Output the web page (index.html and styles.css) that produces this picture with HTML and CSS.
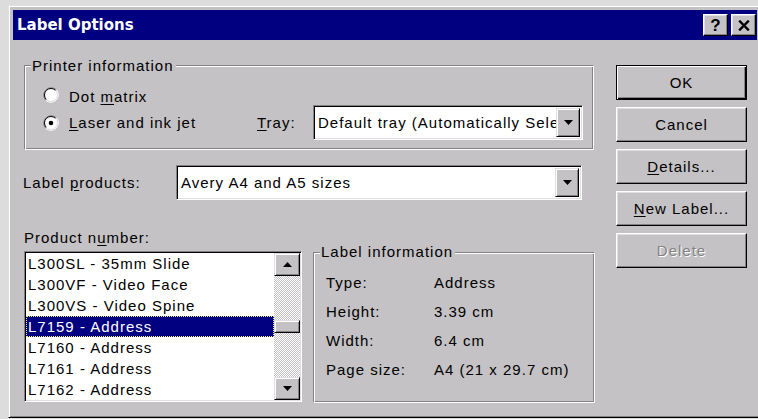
FILE: index.html
```html
<!DOCTYPE html>
<html lang="en">
<head>
<meta charset="utf-8">
<title>Label Options</title>
<link rel="stylesheet" href="styles.css">
</head>
<body>
<div class="window">
  <div class="titlebar">
    <span class="title">Label Options</span>
    <div class="caption-btns">
      <span class="cap-btn help">?</span>
      <span class="cap-btn close">
        <svg width="12" height="11" viewBox="0 0 12 11"><path d="M1.2 0.6 L10.8 10.4 M10.8 0.6 L1.2 10.4" stroke="#000" stroke-width="2.3"/></svg>
      </span>
    </div>
  </div>

  <div class="client">
    <div class="main">
      <div class="group printer">
        <div class="legend">Printer information</div>
        <div class="group-body">
          <div class="radio-row first">
            <label class="radio">
              <svg class="radio-icon" width="16" height="16" viewBox="0 0 16 16">
                <circle cx="8" cy="8" r="6.5" fill="#fff"/>
                <path d="M2.7 13.3 A7.5 7.5 0 0 1 13.3 2.7" fill="none" stroke="#848284"/>
                <path d="M13.3 2.7 A7.5 7.5 0 0 1 2.7 13.3" fill="none" stroke="#fff"/>
                <path d="M3.4 12.6 A6.5 6.5 0 0 1 12.6 3.4" fill="none" stroke="#000"/>
                <path d="M12.6 3.4 A6.5 6.5 0 0 1 3.4 12.6" fill="none" stroke="#e0dfe0"/>
              </svg>
              <span>Dot <u>m</u>atrix</span>
            </label>
          </div>
          <div class="radio-row tray-row">
            <label class="radio laser">
              <svg class="radio-icon" width="16" height="16" viewBox="0 0 16 16">
                <circle cx="8" cy="8" r="6.5" fill="#fff"/>
                <path d="M2.7 13.3 A7.5 7.5 0 0 1 13.3 2.7" fill="none" stroke="#848284"/>
                <path d="M13.3 2.7 A7.5 7.5 0 0 1 2.7 13.3" fill="none" stroke="#fff"/>
                <path d="M3.4 12.6 A6.5 6.5 0 0 1 12.6 3.4" fill="none" stroke="#000"/>
                <path d="M12.6 3.4 A6.5 6.5 0 0 1 3.4 12.6" fill="none" stroke="#e0dfe0"/>
                <circle cx="8" cy="8" r="2.3" fill="#000"/>
              </svg>
              <span><u>L</u>aser and ink jet</span>
            </label>
            <span class="tray-label"><u>T</u>ray:</span>
            <div class="combo tray-combo">
              <span class="combo-text">Default tray (Automatically Select)</span>
              <span class="drop-btn"><svg width="9" height="5" viewBox="0 0 9 5"><polygon points="0,0 9,0 4.5,5" fill="#000"/></svg></span>
            </div>
          </div>
        </div>
      </div>

      <div class="field-row">
        <span class="field-label">Label <u>p</u>roducts:</span>
        <div class="combo product-combo">
          <span class="combo-text">Avery A4 and A5 sizes</span>
          <span class="drop-btn"><svg width="9" height="5" viewBox="0 0 9 5"><polygon points="0,0 9,0 4.5,5" fill="#000"/></svg></span>
        </div>
      </div>

      <div class="product-label">Product n<u>u</u>mber:</div>

      <div class="lower">
        <div class="listbox">
          <ul class="items">
            <li>L300SL - 35mm Slide</li>
            <li>L300VF - Video Face</li>
            <li>L300VS - Video Spine</li>
            <li class="selected">L7159 - Address</li>
            <li>L7160 - Address</li>
            <li>L7161 - Address</li>
            <li>L7162 - Address</li>
          </ul>
          <div class="scrollbar">
            <span class="sb-btn"><svg width="9" height="5" viewBox="0 0 9 5"><polygon points="0,5 9,5 4.5,0" fill="#000"/></svg></span>
            <div class="sb-track"><span class="sb-thumb" style="margin-top:44px"></span></div>
            <span class="sb-btn"><svg width="9" height="5" viewBox="0 0 9 5"><polygon points="0,0 9,0 4.5,5" fill="#000"/></svg></span>
          </div>
        </div>

        <div class="group info">
          <div class="legend">Label information</div>
          <dl class="info-grid">
            <dt>Type:</dt><dd>Address</dd>
            <dt>Height:</dt><dd>3.39 cm</dd>
            <dt>Width:</dt><dd>6.4 cm</dd>
            <dt>Page size:</dt><dd>A4 (21 x 29.7 cm)</dd>
          </dl>
        </div>
      </div>
    </div>

    <div class="buttons">
      <span class="btn default">OK</span>
      <span class="btn">Cancel</span>
      <span class="btn"><u>D</u>etails...</span>
      <span class="btn"><u>N</u>ew Label...</span>
      <span class="btn disabled">Delete</span>
    </div>
  </div>
</div>
</body>
</html>
```

FILE: styles.css
```css
* { box-sizing: border-box; }

html, body { margin: 0; padding: 0; }

body {
  width: 758px;
  height: 419px;
  overflow: hidden;
  background: #dcdcdc;
  font-family: "Liberation Sans", Arial, sans-serif;
  font-size: 15px;
  letter-spacing: 1px;
  color: #000;
}

u { text-decoration: underline; text-underline-offset: 2px; }

/* dialog frame */
.window {
  margin: 5px 0 0 8px;
  width: 754px;
  height: 413px;
  background: #c4c2c4;
  border: 1px solid;
  border-color: #e0dfe0 #000 #000 #e0dfe0;
  box-shadow: inset 1px 1px 0 #fff, inset -1px -1px 0 #848284;
  padding: 4px;
  display: flex;
  flex-direction: column;
}

.titlebar {
  height: 30px;
  flex: none;
  background: #000080;
  display: flex;
  align-items: center;
  justify-content: space-between;
  padding: 0 1px 0 4px;
}

.title {
  font-family: "DejaVu Sans", sans-serif;
  font-weight: bold;
  font-size: 15px;
  letter-spacing: 0;
  line-height: 30px;
  color: #fff;
}

.caption-btns { display: flex; gap: 3px; }

.cap-btn {
  width: 25px;
  height: 22px;
  background: #c4c2c4;
  border: 1px solid;
  border-color: #fff #000 #000 #fff;
  box-shadow: inset -1px -1px 0 #848284, inset 1px 1px 0 #e0dfe0;
  display: flex;
  align-items: center;
  justify-content: center;
}

.cap-btn.help {
  font-family: "Liberation Sans", sans-serif;
  font-weight: bold;
  font-size: 17px;
  letter-spacing: 0;
  line-height: 1;
  padding-top: 1px;
}

/* dialog body */
.client {
  flex: 1;
  display: flex;
  padding: 25px 0 0 11px;
}

.main {
  width: 571px;
  display: flex;
  flex-direction: column;
}

/* etched group boxes */
.group {
  border: 1px solid;
  border-color: #848284 #fff #fff #848284;
  box-shadow: inset 1px 1px 0 #fff, inset -1px -1px 0 #848284;
}

.legend {
  display: table;
  margin: -9px 0 0 6px;
  padding: 0 2px 0 1px;
  line-height: 17px;
  background: #c4c2c4;
}

.printer { width: 570px; }

.printer .group-body { padding: 0 10px 9px 18px; }

.radio-row { display: flex; align-items: center; }
.radio-row.first { margin-top: 11px; height: 20px; }
.radio-row.tray-row { height: 35px; }

.radio {
  display: flex;
  align-items: center;
  gap: 10px;
  line-height: 17px;
}
.radio-row.first .radio span { padding-top: 3px; }

.radio-icon { flex: none; }

.radio.laser { width: 214px; }

.tray-label { width: 56px; line-height: 17px; }

/* sunken fields */
.combo {
  height: 35px;
  background: #fff;
  border: 1px solid;
  border-color: #848284 #fff #fff #848284;
  box-shadow: inset 1px 1px 0 #000, inset -1px -1px 0 #e0dfe0;
  padding: 2px;
  display: flex;
  align-items: stretch;
}

.tray-combo { width: 270px; }
.product-combo { width: 406px; }

.combo-text {
  flex: 1;
  min-width: 0;
  overflow: hidden;
  white-space: nowrap;
  padding-left: 2px;
  display: flex;
  align-items: center;
  letter-spacing: 1px;
}

.drop-btn {
  flex: none;
  width: 24px;
  background: #c4c2c4;
  border: 1px solid;
  border-color: #e0dfe0 #000 #000 #e0dfe0;
  box-shadow: inset 1px 1px 0 #fff, inset -1px -1px 0 #848284;
  display: flex;
  align-items: center;
  justify-content: center;
}

.field-row {
  margin-top: 15px;
  display: flex;
  align-items: center;
}

.field-label { width: 153px; line-height: 17px; margin-left: -1px; }

.product-label {
  margin-top: 29px;
  line-height: 17px;
}

.lower {
  margin-top: 5px;
  display: flex;
  gap: 11px;
  align-items: flex-start;
}

/* list box with scroll bar */
.listbox {
  width: 278px;
  height: 151px;
  background: #fff;
  border: 1px solid;
  border-color: #848284 #fff #fff #848284;
  box-shadow: inset 1px 1px 0 #000, inset -1px -1px 0 #e0dfe0;
  padding: 1px;
  display: flex;
}

.items {
  list-style: none;
  margin: 0;
  padding: 0;
  flex: 1;
  overflow: hidden;
}

.items li {
  height: 21px;
  line-height: 21px;
  padding-left: 2px;
  white-space: nowrap;
}

.items li.selected {
  background: #000080;
  color: #fff;
  outline: 1px dotted #f4ee80;
  outline-offset: -1px;
}

.scrollbar {
  width: 26px;
  flex: none;
  display: flex;
  flex-direction: column;
}

.sb-btn {
  height: 23px;
  flex: none;
  background: #c4c2c4;
  border: 1px solid;
  border-color: #e0dfe0 #000 #000 #e0dfe0;
  box-shadow: inset 1px 1px 0 #fff, inset -1px -1px 0 #848284;
  display: flex;
  align-items: center;
  justify-content: center;
}

.sb-track {
  flex: 1;
  background: repeating-conic-gradient(#c4c2c4 0 25%, #fff 0 50%) 0 0 / 2px 2px;
}

.sb-thumb {
  display: block;
  height: 13px;
  background: #c4c2c4;
  border: 1px solid;
  border-color: #e0dfe0 #000 #000 #e0dfe0;
  box-shadow: inset 1px 1px 0 #fff, inset -1px -1px 0 #848284;
}

.info {
  width: 282px;
  height: 151px;
  margin-top: 1px;
}

.info .legend { margin-top: -10px; }

.info-grid {
  margin: 8px 0 0 12px;
  display: grid;
  grid-template-columns: 108px auto;
  line-height: 29px;
}

.info-grid dt, .info-grid dd { margin: 0; white-space: nowrap; }

/* command buttons */
.buttons {
  margin-left: 21px;
  width: 131px;
  display: flex;
  flex-direction: column;
  gap: 7px;
}

.btn {
  height: 35px;
  display: flex;
  align-items: center;
  justify-content: center;
  background: #c4c2c4;
  border: 1px solid;
  border-color: #fff #000 #000 #fff;
  box-shadow: inset -1px -1px 0 #848284, inset 1px 1px 0 #e0dfe0;
}

.btn.default {
  border: 1px solid #000;
  box-shadow: inset 1px 1px 0 #fff, inset -1px -1px 0 #000, inset -2px -2px 0 #848284;
}

.btn.disabled {
  color: #848284;
  text-shadow: 1px 1px 0 #fff;
}
```
